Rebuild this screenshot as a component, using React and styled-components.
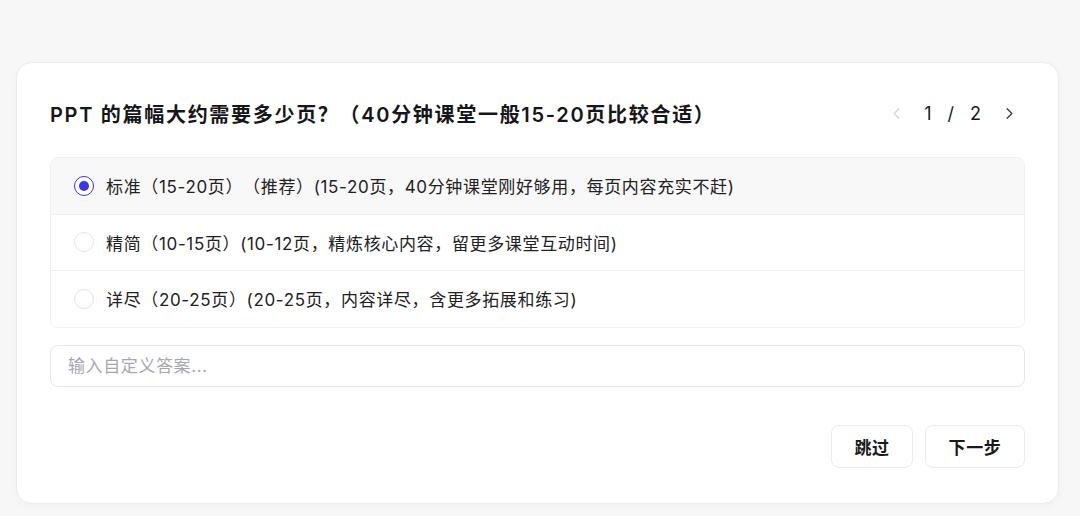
import React, { useState } from 'react';
import styled, { createGlobalStyle } from 'styled-components';
import { ChevronLeft, ChevronRight } from 'lucide-react';

const GlobalStyle = createGlobalStyle`
  body {
    margin: 0;
    background: #f7f7f8;
    font-family: Inter, "Noto Sans CJK SC", sans-serif;
    text-spacing-trim: space-all;
  }
`;

const Page = styled.div`
  padding: 62px 21px 14px 16px;
`;

const Card = styled.div`
  background: #fff;
  border: 1px solid #ececee;
  border-radius: 16px;
  box-shadow: 0 2px 10px rgba(0, 0, 0, 0.03);
  padding: 36px 33px 35px;
`;

const Header = styled.div`
  display: flex;
  align-items: center;
  justify-content: space-between;
  height: 28px;
`;

const Title = styled.h2`
  margin: 0;
  font-size: 20px;
  font-weight: 600;
  letter-spacing: 1.7px;
  color: #161618;
  white-space: nowrap;
`;

const Pager = styled.div`
  display: flex;
  align-items: center;
  color: #1a1a1a;
  font-size: 18px;
  margin-right: 4px;
`;

const PagerBtn = styled.button`
  display: flex;
  align-items: center;
  justify-content: center;
  width: 24px;
  height: 24px;
  padding: 0;
  border: none;
  background: none;
  color: ${({ disabled }) => (disabled ? '#d4d4d8' : '#333')};
`;

const PagerText = styled.span`
  display: flex;
  gap: 16px;
  padding: 0 16px;
`;

const Options = styled.div`
  margin-top: 30px;
  border: 1px solid #f0f0f2;
  border-radius: 8px;
  overflow: hidden;
`;

const Option = styled.label`
  display: flex;
  align-items: center;
  gap: 12px;
  height: 55.5px;
  padding: 0 23px;
  background: ${({ selected }) => (selected ? '#f8f8f9' : '#fff')};
  border-top: ${({ first }) => (first ? 'none' : '1px solid #efeff1')};
  font-size: 17px;
  letter-spacing: 0.65px;
  color: #222;
  cursor: pointer;
  white-space: nowrap;
`;

const Radio = styled.span`
  width: 20px;
  height: 20px;
  box-sizing: border-box;
  border-radius: 50%;
  border: ${({ checked }) => (checked ? '1.8px solid #3a36f0' : '1px solid #e4e4e7')};
  background: #fff;
  display: flex;
  align-items: center;
  justify-content: center;
  flex-shrink: 0;

  &::after {
    content: '';
    width: 10px;
    height: 10px;
    border-radius: 50%;
    background: #3a36f0;
    display: ${({ checked }) => (checked ? 'block' : 'none')};
  }
`;

const Input = styled.input`
  display: block;
  width: 100%;
  box-sizing: border-box;
  margin-top: 17px;
  height: 42px;
  border: 1px solid #e6e6ea;
  border-radius: 8px;
  padding: 0 17px;
  font-size: 17px;
  letter-spacing: 0.6px;
  font-family: inherit;
  color: #222;
  outline: none;

  &::placeholder {
    color: #a6a6b8;
  }
`;

const Footer = styled.div`
  display: flex;
  justify-content: flex-end;
  gap: 12px;
  margin-top: 38px;
`;

const Button = styled.button`
  height: 43px;
  width: ${({ w }) => w}px;
  border: 1px solid #ebebee;
  border-radius: 8px;
  background: #fff;
  font-family: inherit;
  font-size: 17px;
  letter-spacing: 0.6px;
  font-weight: 600;
  color: #1a1a1a;
  cursor: pointer;
`;

const options = [
  '标准（15-20页）（推荐）(15-20页，40分钟课堂刚好够用，每页内容充实不赶)',
  '精简（10-15页）(10-12页，精炼核心内容，留更多课堂互动时间)',
  '详尽（20-25页）(20-25页，内容详尽，含更多拓展和练习)',
];

export default function App() {
  const [selected, setSelected] = useState(0);

  return (
    <Page>
      <GlobalStyle />
      <Card>
        <Header>
          <Title>PPT 的篇幅大约需要多少页？（40分钟课堂一般15-20页比较合适）</Title>
          <Pager>
            <PagerBtn disabled>
              <ChevronLeft size={19} strokeWidth={1.5} />
            </PagerBtn>
            <PagerText>
              <span>1</span>
              <span>/</span>
              <span>2</span>
            </PagerText>
            <PagerBtn>
              <ChevronRight size={19} strokeWidth={1.5} />
            </PagerBtn>
          </Pager>
        </Header>
        <Options>
          {options.map((text, i) => (
            <Option
              key={i}
              first={i === 0}
              selected={selected === i}
              onClick={() => setSelected(i)}
            >
              <Radio checked={selected === i} />
              {text}
            </Option>
          ))}
        </Options>
        <Input placeholder="输入自定义答案..." />
        <Footer>
          <Button w={82}>跳过</Button>
          <Button w={100}>下一步</Button>
        </Footer>
      </Card>
    </Page>
  );
}
